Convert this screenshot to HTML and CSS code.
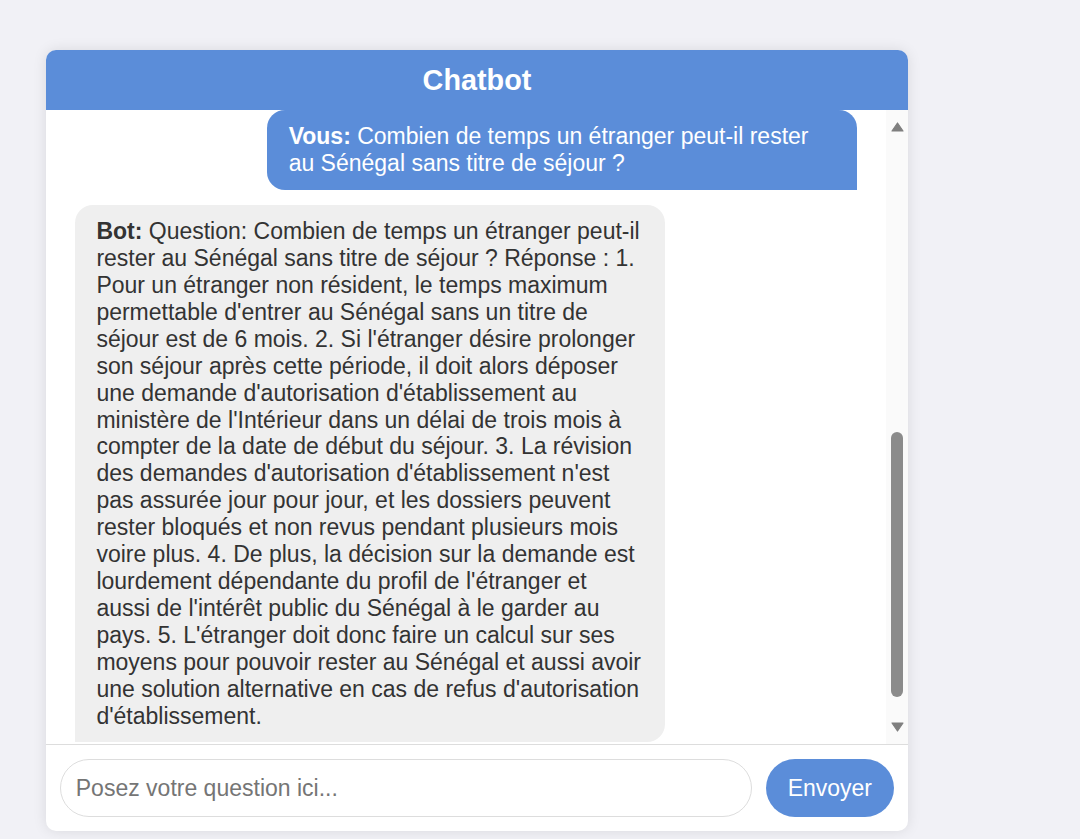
FILE: index.html
```html
<!DOCTYPE html>
<html lang="fr">
<head>
<meta charset="utf-8">
<title>Chatbot</title>
<link rel="stylesheet" href="styles.css">
</head>
<body>
<div class="chat">
  <div class="chat-header">Chatbot</div>
  <div class="chat-body">
    <div class="messages">
      <div class="msg user"><strong>Vous:</strong> Combien de temps un étranger peut-il rester au Sénégal sans titre de séjour ?</div>
      <div class="msg bot"><strong>Bot:</strong> Question: Combien de temps un étranger peut-il rester au Sénégal sans titre de séjour ? Réponse : 1. Pour un étranger non résident, le temps maximum permettable d'entrer au Sénégal sans un titre de séjour est de 6 mois. 2. Si l'étranger désire prolonger son séjour après cette période, il doit alors déposer une demande d'autorisation d'établissement au ministère de l'Intérieur dans un délai de trois mois à compter de la date de début du séjour. 3. La révision des demandes d'autorisation d'établissement n'est pas assurée jour pour jour, et les dossiers peuvent rester bloqués et non revus pendant plusieurs mois voire plus. 4. De plus, la décision sur la demande est lourdement dépendante du profil de l'étranger et aussi de l'intérêt public du Sénégal à le garder au pays. 5. L'étranger doit donc faire un calcul sur ses moyens pour pouvoir rester au Sénégal et aussi avoir une solution alternative en cas de refus d'autorisation d'établissement.</div>
    </div>
    <div class="scrollbar" aria-hidden="true">
      <div class="sb-button">
        <svg width="13" height="10" viewBox="0 0 13 10"><path d="M6.5 1 L12 9 L1 9 Z" fill="#7f7f7f" stroke="#7f7f7f" stroke-width="1.2" stroke-linejoin="round"/></svg>
      </div>
      <div class="sb-track"><div class="sb-thumb"></div></div>
      <div class="sb-button">
        <svg width="13" height="10" viewBox="0 0 13 10"><path d="M1 1 L12 1 L6.5 9 Z" fill="#7f7f7f" stroke="#7f7f7f" stroke-width="1.2" stroke-linejoin="round"/></svg>
      </div>
    </div>
  </div>
  <div class="composer">
    <input class="composer-input" type="text" placeholder="Posez votre question ici...">
    <button class="composer-send" type="button">Envoyer</button>
  </div>
</div>
</body>
</html>
```

FILE: styles.css
```css
html, body {
  margin: 0;
  padding: 0;
}
body {
  background: #f1f1f6;
  font-family: "Liberation Sans", Arial, sans-serif;
  padding: 50px 0 0 46px;
  height: 839px;
  box-sizing: border-box;
  overflow: hidden;
}
.chat {
  width: 862px;
  height: 781px;
  background: #ffffff;
  border-radius: 10px;
  box-shadow: 0 0 14px rgba(0, 0, 0, 0.1);
  overflow: hidden;
  display: flex;
  flex-direction: column;
}
.chat-header {
  flex: 0 0 60px;
  background: #5b8dd9;
  color: #ffffff;
  font-weight: bold;
  font-size: 28.8px;
  display: flex;
  align-items: center;
  justify-content: center;
}
.chat-body {
  flex: 1 1 auto;
  min-height: 0;
  display: flex;
}
.messages {
  flex: 1 1 auto;
  min-width: 0;
  overflow: hidden;
  padding: 0 14.4px;
  display: flex;
  flex-direction: column;
}
.msg {
  flex: 0 0 auto;
  max-width: 547px;
  padding: 13px 21.6px;
  margin: 0 14.4px 14.4px 14.4px;
  font-size: 23px;
  line-height: 26.9px;
}
.user {
  align-self: flex-end;
  background: #5b8dd9;
  color: #ffffff;
  border-radius: 18px 18px 0 18px;
}
.bot {
  align-self: flex-start;
  background: #efefef;
  color: #333333;
  border-radius: 18px 18px 18px 0;
  margin-top: 1px;
}
.scrollbar {
  flex: 0 0 22px;
  background: #fafafa;
  display: flex;
  flex-direction: column;
}
.sb-button {
  flex: 0 0 34px;
  display: flex;
  align-items: center;
  justify-content: center;
}
.sb-track {
  flex: 1 1 auto;
  display: flex;
  flex-direction: column;
  align-items: center;
}
.sb-thumb {
  margin-top: 288px;
  width: 12px;
  height: 265px;
  border-radius: 6px;
  background: #8b8b8b;
}
.composer {
  flex: 0 0 auto;
  border-top: 1px solid #dddddd;
  padding: 14.4px;
  display: flex;
  gap: 14.4px;
  align-items: center;
}
.composer-input {
  flex: 1 1 auto;
  min-width: 0;
  font-family: "Liberation Sans", Arial, sans-serif;
  font-size: 23px;
  line-height: 26.5px;
  padding: 14.4px;
  border: 1px solid #dddddd;
  border-radius: 30px;
  outline: none;
  color: #333333;
}
.composer-input::placeholder {
  color: #757575;
}
.composer-send {
  flex: 0 0 auto;
  font-family: "Liberation Sans", Arial, sans-serif;
  font-size: 23px;
  line-height: 26.5px;
  padding: 15.4px 21.6px;
  border: none;
  border-radius: 30px;
  background: #5b8dd9;
  color: #ffffff;
}
```
